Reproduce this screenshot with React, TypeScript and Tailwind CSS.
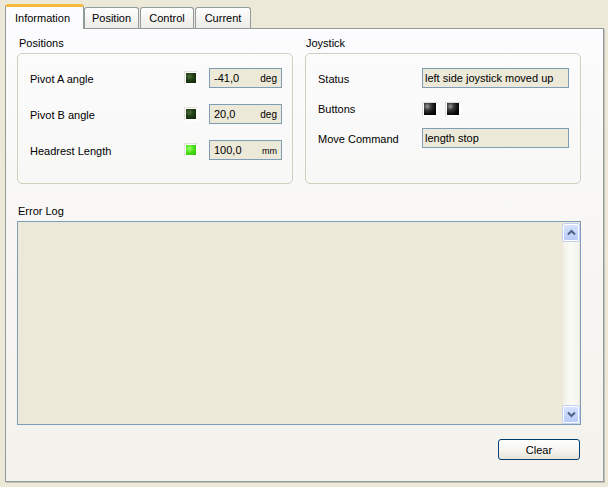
import React from "react";

function LedGreen({ on }: { on?: boolean }) {
  return (
    <div className="w-[14px] h-[14px] border border-t-[#e2e1da] border-l-[#e2e1da] border-r-white border-b-white bg-white flex items-center justify-center">
      <div
        className={
          on
            ? "w-[10px] h-[10px] bg-[radial-gradient(circle_at_35%_35%,#9cff6a_0,#4ce01a_45%,#2fb80c_100%)]"
            : "w-[10px] h-[10px] bg-[radial-gradient(circle_at_35%_35%,#4b6e3c_0,#1e3d14_45%,#0e2608_100%)]"
        }
      />
    </div>
  );
}

function LedBlack() {
  return (
    <div className="w-[16px] h-[15px] border border-t-[#dcdbd4] border-l-[#dcdbd4] border-r-white border-b-white bg-white flex items-center justify-center">
      <div className="w-[12px] h-[12px] bg-[radial-gradient(circle_at_28%_28%,#9a9a9a_0,#3a3a3a_30%,#0a0a0a_65%,#000_100%)]" />
    </div>
  );
}

function Field({ value, unit, unitSmall }: { value: string; unit: string; unitSmall?: boolean }) {
  return (
    <div className="w-[73px] h-[20px] border border-[#7F9DB9] bg-[#ECE9D8] flex items-baseline justify-between pl-[4px] pr-[4px] pt-[3px]">
      <span className="leading-[13px]">{value}</span>
      <span className={unitSmall ? "text-[9px] leading-[13px]" : "text-[10px] leading-[13px]"}>{unit}</span>
    </div>
  );
}

function Arrow({ up }: { up?: boolean }) {
  return (
    <svg width="9" height="7" viewBox="0 0 9 7">
      {up ? (
        <polyline points="1,5.5 4.5,2 8,5.5" fill="none" stroke="#4D6185" strokeWidth="2" />
      ) : (
        <polyline points="1,1.5 4.5,5 8,1.5" fill="none" stroke="#4D6185" strokeWidth="2" />
      )}
    </svg>
  );
}

export default function App() {
  return (
    <div className="w-[608px] h-[487px] bg-[#ECE9D8] pt-[4px] pl-[5px] text-[11px] text-black font-['Liberation_Sans',Arial,sans-serif] overflow-hidden">
      {/* Tabs */}
      <div className="flex items-end h-[24px] relative z-10">
        <div className="w-[79px] h-[25px] mb-[-1px] border-x border-[#919B9C] border-t-[3px] border-t-[#F5B93C] rounded-t-[3px] bg-[#FCFCFE] pl-[9px] flex items-center">
          <span className="leading-none pt-[1px]">Information</span>
        </div>
        <div className="w-[55px] h-[21px] border-x border-t border-[#919B9C] rounded-t-[3px] bg-linear-to-b from-white to-[#ECEBE6] flex items-center justify-center">
          <span className="leading-none pt-[1px]">Position</span>
        </div>
        <div className="w-[54px] h-[21px] ml-[1px] border-x border-t border-[#919B9C] rounded-t-[3px] bg-linear-to-b from-white to-[#ECEBE6] flex items-center justify-center">
          <span className="leading-none pt-[1px]">Control</span>
        </div>
        <div className="w-[56px] h-[21px] ml-[1px] border-x border-t border-[#919B9C] rounded-t-[3px] bg-linear-to-b from-white to-[#ECEBE6] flex items-center justify-center">
          <span className="leading-none pt-[1px]">Current</span>
        </div>
      </div>

      {/* Pane */}
      <div className="w-[599px] h-[454px] border border-[#919B9C] shadow-[1px_1px_0_0_#C4C2B6] bg-linear-to-b from-[#FCFCFE] via-[#F7F6F3] to-[#F3F2EC] pl-[11px] pt-[8px]">
        <div className="w-[564px] flex flex-col">
          {/* Top groups */}
          <div className="flex gap-[12px]">
            {/* Positions */}
            <div className="w-[276px] flex flex-col">
              <div className="h-[13px] leading-[13px] pl-[2px]">Positions</div>
              <div className="mt-[3px] h-[131px] border border-[#D0D0BF] rounded-[5px] pt-[14px] pl-[12px] pr-[10px] flex flex-col gap-[16px]">
                {[
                  { l: "Pivot A angle", v: "-41,0", u: "deg", on: false },
                  { l: "Pivot B angle", v: "20,0", u: "deg", on: false },
                  { l: "Headrest Length", v: "100,0", u: "mm", on: true },
                ].map((r) => (
                  <div key={r.l} className="flex items-center h-[20px]">
                    <span className="flex-1 leading-none pt-[2px]">{r.l}</span>
                    <LedGreen on={r.on} />
                    <div className="w-[11px]" />
                    <Field value={r.v} unit={r.u} unitSmall={r.u === "mm"} />
                  </div>
                ))}
              </div>
            </div>
            {/* Joystick */}
            <div className="w-[276px] flex flex-col">
              <div className="h-[13px] leading-[13px] pl-[1px]">Joystick</div>
              <div className="mt-[3px] h-[131px] border border-[#D0D0BF] rounded-[5px] pt-[14px] pl-[12px] pr-[11px] flex flex-col gap-[10px]">
                <div className="flex items-center h-[20px]">
                  <span className="w-[104px] leading-none pt-[2px]">Status</span>
                  <div className="w-[147px] h-[20px] border border-[#7F9DB9] bg-[#ECE9D8] flex items-center pl-[2px]">
                    <span className="leading-none pt-[1px]">left side joystick moved up</span>
                  </div>
                </div>
                <div className="flex items-center h-[20px]">
                  <span className="w-[104px] leading-none pt-[2px]">Buttons</span>
                  <div className="flex gap-[7px] mt-[2px]">
                    <LedBlack />
                    <LedBlack />
                  </div>
                </div>
                <div className="flex items-center h-[20px]">
                  <span className="w-[104px] leading-none pt-[2px]">Move Command</span>
                  <div className="w-[147px] h-[20px] border border-[#7F9DB9] bg-[#ECE9D8] flex items-center pl-[2px]">
                    <span className="leading-none pt-[1px]">length stop</span>
                  </div>
                </div>
              </div>
            </div>
          </div>

          {/* Error Log */}
          <div className="mt-[21px] h-[13px] leading-[13px] pl-[1px]">Error Log</div>
          <div className="mt-[3px] h-[204px] border border-[#7F9DB9] bg-[#ECE9D8] flex">
            <div className="flex-1" />
            <div className="w-[16px] mr-[1px] mt-[2px] mb-[1px] flex flex-col bg-linear-to-r from-[#F1EFE6] via-[#FBFBF8] to-[#F4F2EB]">
              <div className="h-[17px] rounded-[2px] border border-white bg-linear-to-b from-[#D6E2FE] to-[#B7CBF8] shadow-[0_0_0_1px_#C2D1F3] flex items-center justify-center">
                <Arrow up />
              </div>
              <div className="flex-1" />
              <div className="h-[17px] rounded-[2px] border border-white bg-linear-to-b from-[#D6E2FE] to-[#B7CBF8] shadow-[0_0_0_1px_#C2D1F3] flex items-center justify-center">
                <Arrow />
              </div>
            </div>
          </div>

          {/* Clear */}
          <div className="mt-[14px] flex justify-end pr-[1px]">
            <div className="w-[82px] h-[21px] rounded-[3px] border border-[#003C74] bg-linear-to-b from-white via-[#F6F5F1] to-[#E6E4DA] flex items-center justify-center">
              <span className="leading-none pt-[1px]">Clear</span>
            </div>
          </div>
        </div>
      </div>
    </div>
  );
}
